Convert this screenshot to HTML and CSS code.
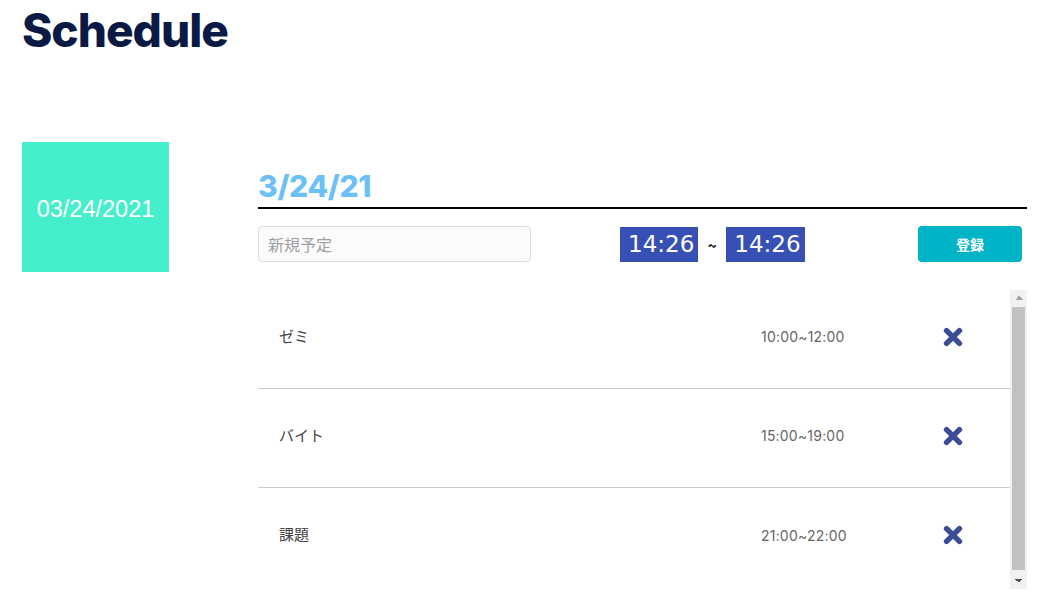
FILE: index.html
```html
<!DOCTYPE html>
<html lang="ja">
<head>
<meta charset="utf-8">
<title>Schedule</title>
<link rel="stylesheet" href="styles.css">
</head>
<body>
<h1 class="title">Schedule</h1>
<main class="main">
  <div class="date-box">03/24/2021</div>
  <section class="panel">
    <h2 class="panel-date">3/24/21</h2>
    <form class="entry">
      <input class="entry-input" type="text" placeholder="新規予定">
      <div class="times">
        <span class="time">14:26</span>
        <span class="tilde">~</span>
        <span class="time">14:26</span>
      </div>
      <button class="submit" type="button">登録</button>
    </form>
    <div class="list-wrap">
      <ul class="list">
        <li class="item"><span class="item-name">ゼミ</span><span class="item-time">10:00~12:00</span><span class="item-del"><svg viewBox="0 0 24 24" width="22" height="22"><path d="M5 5 L19 19 M19 5 L5 19" stroke="#3a4d96" stroke-width="6" stroke-linecap="round"/></svg></span></li>
        <li class="item"><span class="item-name">バイト</span><span class="item-time">15:00~19:00</span><span class="item-del"><svg viewBox="0 0 24 24" width="22" height="22"><path d="M5 5 L19 19 M19 5 L5 19" stroke="#3a4d96" stroke-width="6" stroke-linecap="round"/></svg></span></li>
        <li class="item"><span class="item-name">課題</span><span class="item-time">21:00~22:00</span><span class="item-del"><svg viewBox="0 0 24 24" width="22" height="22"><path d="M5 5 L19 19 M19 5 L5 19" stroke="#3a4d96" stroke-width="6" stroke-linecap="round"/></svg></span></li>
      </ul>
      <div class="scrollbar" aria-hidden="true">
        <div class="sb-btn sb-up"></div>
        <div class="sb-track"><div class="sb-thumb"></div></div>
        <div class="sb-btn sb-down"></div>
      </div>
    </div>
  </section>
</main>
</body>
</html>
```
FILE: styles.css
```css
html, body { margin: 0; padding: 0; background: #fff; }
body { padding: 0 22px; font-family: "Inter", "Noto Sans CJK JP", sans-serif; }

.title {
  margin: 0;
  padding-top: 2px;
  font-family: "Inter", sans-serif;
  font-weight: 800;
  font-size: 46px;
  line-height: 56px;
  letter-spacing: -1px;
  color: #0b1a45;
}

.main {
  display: flex;
  align-items: flex-start;
  margin-top: 84px;
  gap: 89px;
}

.date-box {
  width: 147px;
  height: 130px;
  flex: none;
  background: #46efcb;
  color: #fff;
  font-family: "Liberation Sans", Arial, sans-serif;
  font-size: 23.5px;
  padding-top: 4px;
  box-sizing: border-box;
  display: flex;
  align-items: center;
  justify-content: center;
}

.panel {
  width: 769px;
  padding-top: 24px;
}

.panel-date {
  margin: 0;
  font-family: "Inter", sans-serif;
  font-weight: 800;
  font-size: 30px;
  line-height: 40px;
  letter-spacing: -0.3px;
  color: #6bc1f5;
  border-bottom: 2px solid #000;
  padding-bottom: 1px;
}

.entry {
  display: flex;
  align-items: center;
  margin: 16px 0 0;
  height: 38px;
}

.entry-input {
  box-sizing: border-box;
  width: 273px;
  height: 36px;
  border: 1px solid #ddd;
  border-radius: 4px;
  background: #fbfbfb;
  padding: 0 9px;
  font-family: "Noto Sans CJK JP", sans-serif;
  font-size: 16px;
  color: #333;
}
.entry-input::placeholder { color: #a0a0a0; }

.times {
  display: flex;
  align-items: center;
  margin-left: 89px;
}
.time {
  background: #3750b5;
  color: #fff;
  font-family: "DejaVu Sans", sans-serif;
  font-size: 23px;
  line-height: 35px;
  padding: 0 4px 0 8px;
}
.tilde {
  width: 28px;
  text-align: center;
  font-size: 14px;
  font-weight: 700;
  color: #222;
}

.submit {
  margin-left: auto;
  margin-right: 5px;
  width: 104px;
  height: 36px;
  border: 0;
  border-radius: 4px;
  background: #00b4c8;
  color: #fff;
  font-family: "Noto Sans CJK JP", sans-serif;
  font-weight: 700;
  font-size: 14px;
}

.list-wrap {
  display: flex;
  margin-top: 27px;
  height: 299px;
}

.list {
  flex: 1;
  list-style: none;
  margin: 0;
  padding: 0;
  overflow: hidden;
}

.scrollbar {
  width: 17px;
  flex: none;
  display: flex;
  flex-direction: column;
  background: #f1f1f1;
}
.sb-btn { height: 17px; flex: none; }
.sb-up {
  background-image:
    linear-gradient(to top left, #a3a3a3 50%, transparent 50%),
    linear-gradient(to top right, #a3a3a3 50%, transparent 50%);
  background-size: 4px 4px, 4px 4px;
  background-position: 4.5px 6px, 8.5px 6px;
  background-repeat: no-repeat;
}
.sb-down {
  background-image:
    linear-gradient(to bottom left, #505050 50%, transparent 50%),
    linear-gradient(to bottom right, #505050 50%, transparent 50%);
  background-size: 4px 4px, 4px 4px;
  background-position: 4.5px 7px, 8.5px 7px;
  background-repeat: no-repeat;
}
.sb-track { flex: 1; padding: 0 2px; }
.sb-thumb { height: 263px; background: #c1c1c1; }

.item {
  box-sizing: border-box;
  display: flex;
  align-items: center;
  height: 99px;
  border-bottom: 1px solid #ccc;
  padding: 0 0 5px 21px;
}
.item:last-child { border-bottom: 0; }

.item-name {
  flex: 1;
  font-family: "Noto Sans CJK JP", sans-serif;
  font-size: 15px;
  color: #444;
  padding-bottom: 3px;
}
.item-time {
  width: 181px;
  font-family: "Inter", sans-serif;
  font-size: 14px;
  letter-spacing: 0.2px;
  color: #666;
}
.item-del {
  width: 68px;
  display: flex;
}
.item-del svg { width: 22px; height: 22px; }
```
